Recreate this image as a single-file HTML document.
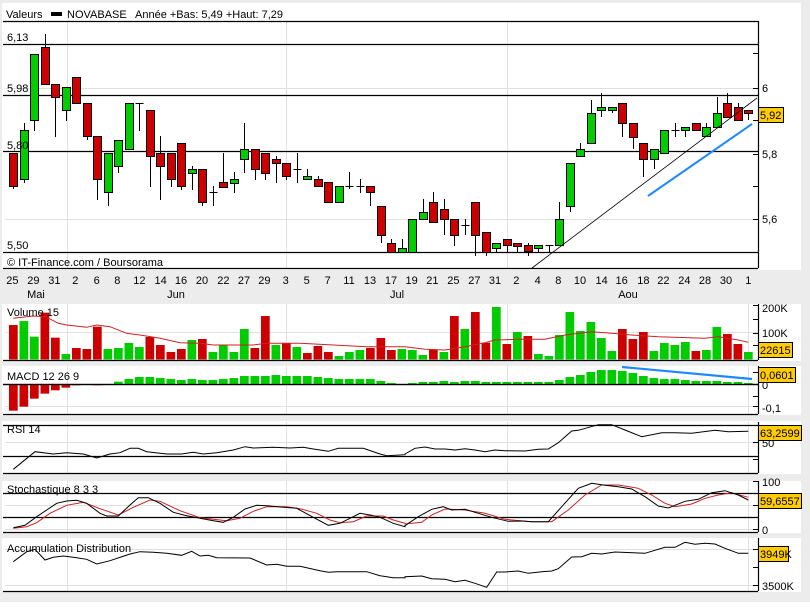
<!DOCTYPE html>
<html><head><meta charset="utf-8"><style>
html,body{margin:0;padding:0;background:#fff;}
svg{display:block;font-family:"Liberation Sans",Arial,sans-serif;font-size:11px;}
.lb{fill:#000;}
</style></head><body>
<svg id="s" width="810" height="611" xmlns="http://www.w3.org/2000/svg">
<rect x="0" y="0" width="810" height="611" fill="#ececec"/>
<!-- main price panel -->
<rect x="2" y="3" width="799" height="267" fill="#fff"/>
<rect x="2" y="270" width="799" height="31" fill="#ececec"/>
<rect x="2" y="304" width="799" height="57" fill="#fff"/>
<rect x="2" y="366" width="799" height="49" fill="#fff"/>
<rect x="2" y="421" width="799" height="53" fill="#fff"/>
<rect x="2" y="481" width="799" height="52" fill="#fff"/>
<rect x="2" y="538" width="799" height="54" fill="#fff"/>
<rect x="0" y="602" width="810" height="9" fill="#fff"/>
<g id="grid" stroke="#e0e0e0" stroke-width="1"></g>
<g id="lines" stroke="#000" stroke-width="1.2"></g>
<g id="shapes"></g>
<text x="6" y="18" class="lb">Valeurs</text>
<rect x="51" y="12" width="11" height="4" fill="#000"/>
<text x="67" y="18" class="lb">NOVABASE</text>
<text x="135" y="18" class="lb">Année +Bas: 5,49 +Haut: 7,29</text>
<text x="7" y="41" class="lb">6,13</text>
<text x="7" y="92" class="lb">5,98</text>
<text x="7" y="149" class="lb">5,80</text>
<text x="7" y="249" class="lb">5,50</text>
<text x="7" y="266" class="lb">© IT-Finance.com / Boursorama</text>
<text x="762" y="92" class="lb">6</text>
<text x="762" y="158" class="lb">5,8</text>
<text x="762" y="223" class="lb">5,6</text>
<g id="dates" class="lb" text-anchor="middle"></g>
<text x="36" y="298" class="lb" text-anchor="middle">Mai</text>
<text x="176" y="298" class="lb" text-anchor="middle">Jun</text>
<text x="397" y="298" class="lb" text-anchor="middle">Jul</text>
<text x="628" y="298" class="lb" text-anchor="middle">Aou</text>
<text x="7" y="316" class="lb">Volume 15</text>
<text x="762" y="312" class="lb">200K</text>
<text x="762" y="337" class="lb">100K</text>
<text x="7" y="380" class="lb">MACD 12 26 9</text>
<text x="762" y="389" class="lb">0</text>
<text x="762" y="412" class="lb">-0,1</text>
<text x="7" y="433" class="lb">RSI 14</text>
<text x="762" y="447" class="lb">50</text>
<text x="7" y="493" class="lb">Stochastique 8 3 3</text>
<text x="762" y="486" class="lb">100</text>
<text x="762" y="534" class="lb">0</text>
<text x="7" y="552" class="lb">Accumulation Distribution</text>
<text x="762" y="590" class="lb">3500K</text>
<g id="labels"></g>
</svg>
<script>
var NS="http://www.w3.org/2000/svg",s=document.getElementById('s');
function el(p,t,a){var e=document.createElementNS(NS,t);for(var k in a)e.setAttribute(k,a[k]);document.getElementById(p).appendChild(e);return e;}
function ln(p,x1,y1,x2,y2,c,w){el(p,'line',{x1:x1,y1:y1,x2:x2,y2:y2,stroke:c||'#000','stroke-width':w||1});}
// grid
[[88],[219],[332],[406],[442],[505],[529],[549],[585]].forEach(function(a){ln('grid',5,a[0]+.5,758,a[0]+.5,'#e0e0e0');});
[[21,268],[304,360],[366,414],[422,473],[481,532],[538,591]].forEach(function(r,i){[67,286,507].forEach(function(x){ln('grid',x+.5,r[0],x+.5,r[1],'#e0e0e0');}); if(i>0) ln('grid',748.5,r[0],748.5,r[1],'#e0e0e0');});
// black horizontal
[21,44,95,151,252,268,360,384,414,425,456,473,493,517,532,591].forEach(function(y){ln('lines',3,y+.5,758,y+.5,'#000',1.2);});
[[21,268],[304,360],[366,414],[422,473],[481,532],[538,591]].forEach(function(r){ln('lines',758.5,r[0],758.5,r[1],'#000',1.2);});
// ticks
[53,88,120,154,186,219,252,305,319,333,345,372,384,396,406,425,442,459,481,493,505,517,529,549,567,585].forEach(function(y){ln('lines',753,y+.5,758,y+.5,'#000',1);});
// dates
var d1=[[37,'25'],[100,'29'],[163,'31'],[226,'2'],[290,'6'],[352,'8'],[418,'12'],[482,'14'],[543,'16'],[606,'20'],[670,'22'],[732,'27'],[793,'29'],[857,'3'],[920,'5'],[983,'7'],[1047,'11'],[1110,'13'],[1173,'17']];
var d2=[[20,'19'],[82,'21'],[145,'25'],[208,'27'],[270,'31'],[334,'2'],[398,'4'],[460,'8'],[525,'10'],[590,'14'],[650,'16'],[715,'18'],[775,'22'],[838,'24'],[900,'28'],[963,'30'],[1030,'1']];
d1.forEach(function(d){el('dates','text',{x:d[0]/3,y:284}).textContent=d[1];});
d2.forEach(function(d){el('dates','text',{x:405+d[0]/3,y:284}).textContent=d[1];});
var R='#cc0000',G='#00cc00';
// candles [bt,bb,wt,wb,c]
var C=[[153,186,153,189,'r'],[130,179,123,183,'g'],[54,120,54,131,'g'],[47,84,34,84,'r'],[84,97,84,137,'r'],[87,110,87,121,'g'],[77,103,77,103,'r'],[103,136,103,140,'r'],[136,179,136,200,'r'],[153,192,153,206,'g'],[140,166,140,173,'g'],[103,149,103,149,'g'],[103,103,103,131,'x'],[110,156,110,187,'r'],[153,166,136,200,'r'],[153,179,153,187,'r'],[143,186,143,190,'r'],[169,173,166,190,'g'],[169,202,169,206,'r'],[192,192,186,206,'x'],[182,187,153,187,'r'],[179,183,172,193,'g'],[149,159,123,173,'g'],[149,169,149,180,'r'],[153,173,153,180,'r'],[159,163,156,183,'r'],[163,176,163,180,'r'],[169,169,153,183,'x'],[176,179,169,179,'g'],[179,186,176,186,'r'],[182,202,182,202,'r'],[186,202,186,202,'g'],[186,186,172,189,'x'],[186,186,179,193,'x'],[186,192,186,206,'r'],[206,235,206,243,'r'],[243,252,239,252,'r'],[248,252,239,252,'g'],
[219,252,219,252,'g'],[212,219,199,219,'g'],[202,222,192,222,'r'],[209,219,199,235,'r'],[219,235,219,246,'r'],[225,225,219,235,'x'],[202,235,202,256,'r'],[232,252,232,256,'r'],[243,248,243,252,'g'],[239,245,239,252,'r'],[243,245,243,252,'r'],[245,251,243,256,'r'],[245,248,245,252,'g'],[245,245,245,252,'x'],[219,245,202,245,'g'],[163,206,163,212,'g'],[149,156,143,156,'g'],[113,143,100,143,'g'],[107,110,93,117,'g'],[107,110,107,113,'g'],[103,123,103,137,'r'],[123,137,123,149,'r'],[143,159,143,177,'r'],[149,159,149,169,'g'],[130,153,130,153,'g'],[130,130,123,137,'x'],[127,130,127,137,'g'],[123,130,123,130,'r'],[127,136,123,136,'g'],[113,127,97,127,'g'],[103,117,93,117,'r'],[107,120,103,120,'r'],[110,113,110,120,'r']];
C.forEach(function(c,i){var x=Math.round(13.3+i*10.5)+.5;
 ln('shapes',x,c[2],x,c[3],'#000',1);
 if(c[4]=='x'){ln('shapes',x-4,c[0]+.5,x+4,c[0]+.5,'#000',1);}
 else el('shapes','rect',{x:x-4,y:c[0]+.5,width:8,height:Math.max(c[1]-c[0],3),fill:c[4]=='r'?R:G,stroke:'#000','stroke-width':1});});
// trendlines
ln('shapes',532,268,757,98,'#000',0.8);
ln('shapes',648,196,752,124,'#1e88ff',2);
// volume
var V1=[[75,'r'],[63,'g'],[110,'g'],[38,'r'],[113,'r'],[162,'g'],[144,'r'],[147,'r'],[80,'r'],[147,'g'],[144,'g'],[129,'g'],[141,'g'],[111,'r'],[135,'r'],[156,'r'],[147,'r'],[120,'g'],[117,'r'],[156,'g'],[136,'g'],[156,'g'],[87,'g'],[144,'r'],[48,'r'],[135,'g'],[130,'r'],[141,'g'],[159,'r'],[138,'r'],[156,'r'],[168,'g'],[156,'g'],[150,'g'],[144,'r'],[114,'r'],[150,'r'],[147,'g'],
[150,'g'],[165,'g'],[149,'r'],[156,'g'],[48,'r'],[87,'g'],[36,'r'],[128,'r'],[21,'g'],[132,'r'],[96,'g'],[108,'r'],[162,'g'],[168,'g'],[105,'g'],[36,'g'],[93,'g'],[66,'g'],[114,'g'],[153,'g'],[87,'r'],[117,'r'],[96,'r'],[153,'g'],[129,'g'],[135,'g'],[126,'g'],[153,'r'],[150,'g'],[81,'g'],[102,'r'],[132,'r'],[156,'g']];
V1.forEach(function(v,i){var x=13.3+i*10.5,t=300+v[0]/3;el('shapes','rect',{x:x-4.3,y:t,width:8.7,height:359.5-t,fill:v[1]=='r'?R:G});});
// macd
var M=[332,320,296,281,271,263,256,253,256,253,245,237,231,231,234,237,240,237,240,240,237,234,228,228,228,225,228,228,228,231,234,237,237,237,237,243,249,253,
249,246,246,243,246,243,243,246,246,246,246,246,246,246,240,231,225,216,210,210,213,219,228,234,237,237,240,243,243,243,246,246,249];
M.forEach(function(m,i){var x=13.3+i*10.5,y=300+m/3,z=384.5;if(Math.abs(y-z)<0.6)return;el('shapes','rect',{x:x-4.3,y:Math.min(y,z),width:8.7,height:Math.abs(y-z),fill:y>z?R:G});});
ln('shapes',3,384.5,758,384.5,'#000',1.2);
ln('shapes',622,367,752,379,'#1e88ff',2.2);
function pl(a,b,col,w){var p=[];a.forEach(function(q){p.push((q[0]/3).toFixed(1)+','+(300+q[1]/3).toFixed(1));});b.forEach(function(q){p.push((405+q[0]/3).toFixed(1)+','+(300+q[1]/3).toFixed(1));});el('shapes','polyline',{points:p.join(' '),fill:'none',stroke:col,'stroke-width':w||1});}
pl([[40,55],[100,48],[137,50],[175,70],[200,75],[260,82],[290,75],[330,80],[380,100],[420,105],[480,115],[540,128],[600,130],[640,135],[760,135],[800,130],[900,130],[1000,135],[1100,140],[1215,140]],[[0,140],[60,148],[120,150],[180,140],[240,128],[270,120],[340,118],[420,118],[480,105],[560,95],[620,100],[680,105],[760,110],[900,115],[940,110],[1000,120],[1030,127]],'#cc2222',1);
pl([[40,508],[105,455],[160,462],[200,458],[250,462],[290,474],[330,462],[360,458],[390,445],[415,445],[440,455],[500,462],[545,462],[580,457],[610,462],[650,458],[700,450],[735,440],[760,444],[820,442],[870,444],[910,442],[940,447],[985,454],[1015,445],[1090,445],[1140,462],[1160,467],[1215,464]],[[0,462],[30,445],[60,441],[90,447],[120,447],[150,450],[180,446],[210,450],[240,455],[270,450],[300,452],[360,453],[400,448],[430,447],[460,428],[500,393],[520,391],[580,374],[620,374],[660,390],[710,410],[770,398],[810,398],[860,400],[930,391],[970,395],[1030,394]],'#000',1);
pl([[40,685],[80,680],[110,668],[150,640],[200,616],[250,607],[300,626],[355,645],[400,622],[450,600],[480,604],[540,632],[600,653],[680,662],[720,655],[760,634],[800,620],[860,620],[900,626],[950,640],[990,660],[1020,668],[1060,665],[1100,648],[1150,648],[1180,660],[1215,670]],[[0,672],[50,667],[80,645],[120,627],[180,630],[240,640],[300,658],[380,665],[440,665],[490,630],[540,585],[590,555],[640,555],[700,565],[740,585],[780,610],[810,620],[860,612],[900,595],[940,585],[980,578],[1030,592]],'#cc2222',1);
pl([[40,683],[75,676],[110,650],[140,630],[170,610],[200,603],[230,601],[260,610],[300,640],[320,648],[355,648],[390,615],[415,593],[445,593],[480,610],[520,637],[560,647],[600,655],[640,662],[670,667],[700,652],[735,627],[770,616],[800,617],[850,622],[890,625],[940,652],[985,676],[1020,670],[1050,655],[1080,640],[1110,645],[1140,652],[1180,670],[1215,680]],[[0,677],[40,650],[80,628],[115,620],[140,630],[180,628],[220,640],[260,652],[310,664],[350,663],[380,665],[430,665],[470,620],[520,565],[560,550],[600,556],[640,560],[680,567],[720,590],[760,618],[790,624],[840,604],[880,598],[920,578],[960,572],[1000,585],[1030,600]],'#000',1);
pl([[40,785],[80,755],[105,748],[135,780],[160,772],[190,768],[220,772],[260,778],[290,792],[330,782],[390,762],[420,755],[460,757],[500,760],[545,766],[575,754],[600,768],[625,766],[650,773],[750,774],[800,795],[830,793],[860,799],[900,799],[960,812],[985,817],[1010,815],[1100,815],[1140,827],[1180,833],[1215,833]],[[0,830],[50,828],[80,836],[120,838],[150,845],[180,841],[210,850],[245,862],[275,816],[300,816],[340,813],[370,820],[410,815],[440,813],[460,806],[500,771],[530,770],[560,760],[590,762],[630,756],[720,760],[780,742],[810,742],[840,727],[870,733],[900,730],[930,732],[960,745],[1000,760],[1030,760]],'#000',1);
// yellow labels
[[107,5.92,'5,92',25],[342,0,'22615',34],[367,0,'0,0601',37],[425,0,'63,2599',43],[493,0,'59,6557',43],[546,0,'3949K',30]].forEach(function(l){
 el('labels','rect',{x:758.5,y:l[0]+.5,width:l[3],height:15,fill:'#ffcc00',stroke:'#000','stroke-width':1});
 var t=el('labels','text',{x:760,y:l[0]+12,fill:'#000'});t.textContent=l[2];});
</script>
</body></html>
